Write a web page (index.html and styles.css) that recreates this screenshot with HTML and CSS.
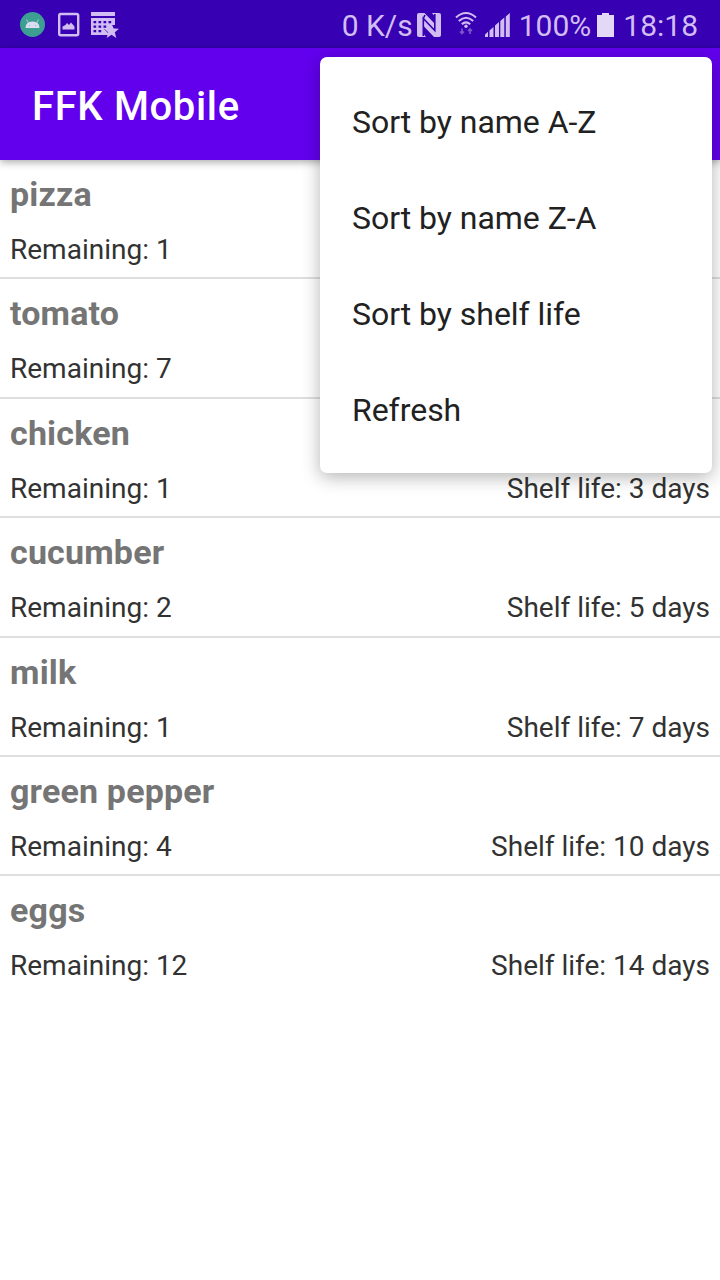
FILE: index.html
```html
<!DOCTYPE html>
<html lang="en">
<head>
<meta charset="utf-8">
<title>FFK Mobile</title>
<link rel="stylesheet" href="styles.css">
</head>
<body>
<div class="status">
  <svg class="notifications" width="140" height="48" viewBox="0 0 140 48">
    <circle cx="32.500" cy="24.500" r="12.500" fill="#3c9f91"/>
    <path d="M25.500 28q0-6.500 7-6.500t7 6.500z" fill="#dcdcf2"/>
    <path d="M28.500 23l-2-3.500M36.500 23l2-3.500" stroke="#b5cfe0" stroke-width="1"/>
    <circle cx="29.500" cy="25.500" r=".6" fill="#7fb5b9"/><circle cx="35.500" cy="25.500" r=".6" fill="#7fb5b9"/>
    <rect x="59.200" y="14" width="19" height="21.200" rx="1.500" fill="none" stroke="#d2bdf2" stroke-width="2.400"/>
    <path d="M62.500 29.500v-3l3-1.500 1.500-2 2 2 2-2.500 3.500 4v3z" fill="#d2bdf2"/>
    <g fill="#d2bdf2">
      <path d="M91 12h24v4H91z"/>
      <path fill-rule="evenodd" d="M91 18h24v7h-3l-2 4h-6l4 4v2H91zM93.500 21v2.200h2.700V21zM98.500 21v2.200h2.700V21zM103.500 21v2.200h2.700V21zM108.500 21v2.200h2.700V21zM93.500 25.500v2.200h2.700v-2.200zM98.500 25.500v2.200h2.700v-2.200zM103.500 25.500v2.200h2.700v-2.200zM93.500 30v2.200h2.700V30zM98.500 30v2.200h2.700V30z"/>
      <path d="M111.500 23.500l2.200 5 5.300.3-4.200 3.500 1.500 5.700-4.800-3.200-4.800 3.200 1.500-5.700-4.200-3.500 5.300-.3z"/>
    </g>
  </svg>
  <div class="system">
    <span class="rate">0 K/s</span>
    <svg class="nfc" width="24" height="24" viewBox="0 0 24 24">
      <path d="M2 0h5.500L17 10V2.500L15 0h7q2 0 2 2v20q0 2-2 2h-5L7 13.500v8L9 24H2q-2 0-2-2V2q0-2 2-2z" fill="#d2bdf2"/>
      <path d="M6.300 23V5.500L17.800 17.500V1M6.300 5.500L8 2" fill="none" stroke="#3700b3" stroke-width="1.600"/>
    </svg>
    <svg class="wifi" width="24" height="26" viewBox="0 0 24 26">
      <g fill="none" stroke="#d2bdf2" stroke-width="2.100">
        <path d="M2 6.500Q12-2.500 22 6.500M4.800 10Q12 3.500 19.200 10M7.800 13.200Q12 9.500 16.200 13.200"/>
      </g>
      <circle cx="12" cy="15.300" r="1.700" fill="#d2bdf2"/>
      <path d="M8 17.500v5M6 20.500l2 2 2-2M16 23v-5M14 20l2-2 2 2" fill="none" stroke="#7d55ca" stroke-width="1.700"/>
    </svg>
    <svg class="signal" width="25" height="24" viewBox="0 0 25 24">
      <path d="M0 24v-2.500l3-2.700V24zM4.500 24v-6.500L8.500 14v10zM10 24V12.500L14 9v15zM15.300 24V8l4-3.500V24zM20.800 24V3.500L24.800 0v24z" fill="#d2bdf2"/>
    </svg>
    <span class="percent">100%</span>
    <svg class="battery" width="17" height="24" viewBox="0 0 17 24">
      <path d="M0 2h5V0h7v2h5v22H0z" fill="#e3d8f6"/>
    </svg>
    <span class="clock">18:18</span>
  </div>
</div>
<header class="appbar">FFK Mobile</header>
<main class="list">
  <div class="row"><div class="name">pizza</div><div class="detail"><span>Remaining: 1</span></div></div>
  <div class="row"><div class="name">tomato</div><div class="detail"><span>Remaining: 7</span></div></div>
  <div class="row"><div class="name">chicken</div><div class="detail"><span>Remaining: 1</span><span>Shelf life: 3 days</span></div></div>
  <div class="row"><div class="name">cucumber</div><div class="detail"><span>Remaining: 2</span><span>Shelf life: 5 days</span></div></div>
  <div class="row"><div class="name">milk</div><div class="detail"><span>Remaining: 1</span><span>Shelf life: 7 days</span></div></div>
  <div class="row"><div class="name">green pepper</div><div class="detail"><span>Remaining: 4</span><span>Shelf life: 10 days</span></div></div>
  <div class="row"><div class="name">eggs</div><div class="detail"><span>Remaining: 12</span><span>Shelf life: 14 days</span></div></div>
</main>
<nav class="menu">
  <div class="item">Sort by name A-Z</div>
  <div class="item">Sort by name Z-A</div>
  <div class="item">Sort by shelf life</div>
  <div class="item">Refresh</div>
</nav>
</body>
</html>
```
FILE: styles.css
```css
* { box-sizing: border-box; }
body {
  margin: 0;
  width: 720px;
  height: 1280px;
  overflow: hidden;
  background: #fff;
  font-family: Roboto, sans-serif;
  position: relative;
}
svg { display: block; flex: none; }
.status {
  height: 48px;
  background: #3700b3;
  display: flex;
  justify-content: space-between;
  color: #d2bdf2;
  font-size: 30px;
  line-height: 48px;
  white-space: nowrap;
}
.system {
  display: flex;
  align-items: center;
  padding-right: 22px;
}
.rate, .percent, .clock { padding-top: 3px; }
.nfc { margin: 2px 0 0 4px; }
.wifi { margin: 0 0 0 13px; }
.signal { margin: 2px 9px 0 7px; }
.battery { margin: 1px 9px 0 6px; }
.appbar {
  height: 112px;
  padding: 3px 32px 0;
  background: #6200ee;
  color: #fff;
  font-size: 40px;
  font-weight: 500;
  letter-spacing: .65px;
  line-height: 112px;
  position: relative;
  box-shadow: 0 2px 8px rgba(0, 0, 0, .35);
}
.row {
  height: 119.4px;
  padding: 10px 10px 0;
  border-bottom: 2px solid #dfdfdf;
}
.row:last-child { border-bottom: 0; }
.name {
  font-size: 34px;
  font-weight: 700;
  letter-spacing: .18px;
  line-height: 48px;
  color: #757575;
}
.detail {
  display: flex;
  justify-content: space-between;
  padding-top: 12px;
  font-size: 28px;
  line-height: 40px;
  color: #323232;
}
.menu {
  position: absolute;
  top: 57px;
  left: 320px;
  width: 392px;
  padding: 16px 0;
  background: #fff;
  border-radius: 7px;
  box-shadow: 0 4px 18px rgba(0, 0, 0, .3);
}
.item {
  height: 96px;
  padding: 0 32px;
  line-height: 98px;
  font-size: 32px;
  letter-spacing: -.04px;
  color: #212121;
}
```
